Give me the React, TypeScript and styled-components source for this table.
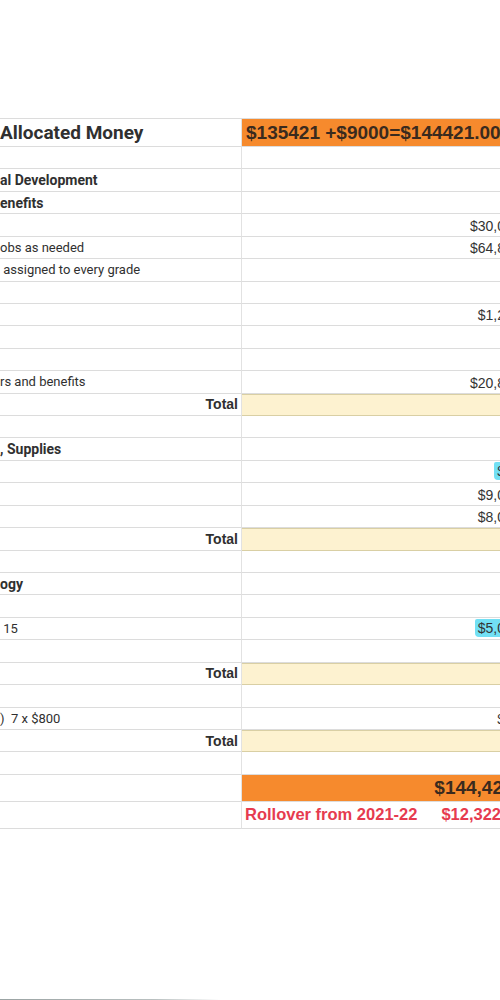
import React from "react";
import styled, { createGlobalStyle, css } from "styled-components";

const GlobalStyle = createGlobalStyle`
  html, body {
    margin: 0;
    background: #ffffff;
    overflow: hidden;
  }
`;

const Page = styled.div`
  width: 500px;
  height: 1000px;
  overflow: hidden;
  padding-top: 118px;
  box-sizing: border-box;
`;

const Sheet = styled.div`
  width: 545px;
  display: flex;
  flex-direction: column;
  border-top: 1px solid #dcdcdc;
`;

const Row = styled.div<{ $h: number }>`
  display: flex;
  height: ${(p) => p.$h}px;
  box-sizing: border-box;
`;

type LabelKind = "plain" | "title" | "section" | "total";
type ValueKind = "plain" | "header" | "total" | "grand" | "rollover";

const Label = styled.div<{ $kind: LabelKind }>`
  width: 242px;
  flex: none;
  display: flex;
  align-items: center;
  box-sizing: border-box;
  border-bottom: 1px solid #dcdcdc;
  border-right: 1px solid #e2e2e2;
  font-family: Roboto, "Liberation Sans", sans-serif;
  font-size: 13px;
  color: #303030;
  white-space: pre;
  overflow: hidden;

  ${(p) =>
    p.$kind === "title" &&
    css`
      font-size: 19px;
      font-weight: 700;
    `}
  ${(p) =>
    p.$kind === "section" &&
    css`
      font-size: 14px;
      font-weight: 700;
    `}
  ${(p) =>
    p.$kind === "total" &&
    css`
      justify-content: flex-end;
      padding-right: 3px;
      font-family: "Liberation Sans", Arial, sans-serif;
      font-size: 14px;
      font-weight: 700;
    `}
`;

const Value = styled.div<{ $kind: ValueKind }>`
  flex: 1;
  display: flex;
  align-items: flex-end;
  justify-content: flex-end;
  box-sizing: border-box;
  padding: 0 5px 2px 0;
  border-bottom: 1px solid #dcdcdc;
  font-family: "Liberation Sans", Arial, sans-serif;
  font-size: 14px;
  color: #333333;
  white-space: nowrap;

  ${(p) =>
    p.$kind === "header" &&
    css`
      align-items: center;
      justify-content: flex-start;
      padding: 0 0 0 4px;
      background: #f68a2d;
      font-size: 19px;
      font-weight: 700;
      color: #3a2a1e;
    `}
  ${(p) =>
    p.$kind === "total" &&
    css`
      background: #fdf2d0;
      border-top: 1px solid #d9cfa4;
      border-bottom: 1px solid #d9cfa4;
    `}
  ${(p) =>
    p.$kind === "grand" &&
    css`
      align-items: center;
      padding-bottom: 0;
      background: #f68a2d;
      font-size: 19px;
      font-weight: 700;
      color: #3a2a1e;
    `}
  ${(p) =>
    p.$kind === "rollover" &&
    css`
      align-items: center;
      justify-content: flex-start;
      gap: 24px;
      padding: 0 0 0 3px;
      font-size: 16.5px;
      font-weight: 700;
      color: #e63b4f;
    `}
`;

const Marked = styled.span`
  background: #72e0f4;
  padding: 1px 0 1px 3px;
  border-radius: 2px 0 0 4px;
`;

const ScanEdge = styled.div`
  margin-top: 170px;
  width: 220px;
  height: 2px;
  background: linear-gradient(90deg, #9aa3a3 0%, #b9c0c0 70%, rgba(255, 255, 255, 0) 100%);
`;

interface Line {
  label?: string;
  kind?: LabelKind;
  value?: string;
  vkind?: ValueKind;
  mark?: boolean;
  h?: number;
}

const ROW = 22.43;

const lines: Line[] = [
  { label: "Allocated Money", kind: "title", value: "$135421 +$9000=$144421.00", vkind: "header", h: 28 },
  {},
  { label: "al Development", kind: "section" },
  { label: "enefits", kind: "section" },
  { value: "$30,000.00" },
  { label: "obs as needed", value: "$64,800.00" },
  { label: " assigned to every grade" },
  {},
  { value: "$1,200.00" },
  {},
  {},
  { label: "rs and benefits", value: "$20,800.00" },
  { label: "Total", kind: "total", vkind: "total" },
  {},
  { label: ", Supplies", kind: "section" },
  { value: "$4,500", mark: true },
  { value: "$9,000.00" },
  { value: "$8,000.00" },
  { label: "Total", kind: "total", vkind: "total" },
  {},
  { label: "ogy", kind: "section" },
  {},
  { label: " 15", value: "$5,000.00", mark: true },
  {},
  { label: "Total", kind: "total", vkind: "total" },
  {},
  { label: ")  7 x $800", value: "$5,600" },
  { label: "Total", kind: "total", vkind: "total" },
  {},
  { value: "$144,421.00", vkind: "grand", h: 27 },
  { vkind: "rollover", h: 27 },
];

const App: React.FC = () => {
  return (
    <>
      <GlobalStyle />
      <Page>
        <Sheet>
          {lines.map((line, i) => (
            <Row key={i} $h={line.h ?? ROW}>
              <Label $kind={line.kind ?? "plain"}>{line.label ?? ""}</Label>
              <Value $kind={line.vkind ?? "plain"}>
                {line.vkind === "rollover" ? (
                  <>
                    <span>Rollover from 2021-22</span>
                    <span>$12,322.00</span>
                  </>
                ) : line.mark ? (
                  <Marked>{line.value}</Marked>
                ) : (
                  line.value ?? ""
                )}
              </Value>
            </Row>
          ))}
        </Sheet>
        <ScanEdge />
      </Page>
    </>
  );
};

export default App;
